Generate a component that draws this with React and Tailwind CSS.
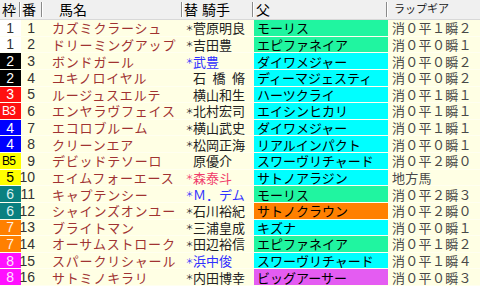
import React from "react";

const frameColors = {
  1: "bg-white text-[#333]",
  2: "bg-black text-white",
  3: "bg-[#ff1010] text-white",
  4: "bg-[#0000ff] text-white",
  5: "bg-[#ffff00] text-black",
  6: "bg-[#0a8080] text-[#d8f0f0]",
  7: "bg-[#ff8000] text-[#fff0e0]",
  8: "bg-[#ff10ff] text-[#ffe0ff]",
};

const sireColors = {
  g: "bg-[#20f5a0]",
  c: "bg-[#00ffff]",
  o: "bg-[#ff8000]",
  p: "bg-[#e45cf2]",
};

const jockeyColors = {
  k: "text-[#222]",
  b: "text-[#3030ff]",
  r: "text-[#f03a6a]",
};

// 枠, 枠色, 番, 馬名, 騎手, 替, 色, 父, 父色, ラップギア
const horses = [
  ["1", 1, 1, "カズミクラーシュ", "菅原明良", true, "k", "モーリス", "g", "消０平１瞬２"],
  ["1", 1, 2, "ドリーミングアップ", "吉田豊", true, "k", "エピファネイア", "g", "消０平０瞬１"],
  ["2", 2, 3, "ボンドガール", "武豊", true, "b", "ダイワメジャー", "c", "消０平０瞬２"],
  ["2", 2, 4, "ユキノロイヤル", "石橋脩", false, "k", "ディーマジェスティ", "c", "消０平０瞬２"],
  ["3", 3, 5, "ルージュスエルテ", "横山和生", false, "k", "ハーツクライ", "c", "消０平１瞬１"],
  ["B3", 3, 6, "エンヤラヴフェイス", "北村宏司", true, "k", "エイシンヒカリ", "c", "消０平１瞬１"],
  ["4", 4, 7, "エコロブルーム", "横山武史", true, "k", "ダイワメジャー", "c", "消０平１瞬１"],
  ["4", 4, 8, "クリーンエア", "松岡正海", true, "k", "リアルインパクト", "c", "消０平０瞬１"],
  ["B5", 5, 9, "デビッドテソーロ", "原優介", false, "k", "スワーヴリチャード", "c", "消０平２瞬０"],
  ["5", 5, 10, "エイムフォーエース", "森泰斗", true, "r", "サトノアラジン", "c", "地方馬"],
  ["6", 6, 11, "キャプテンシー", "Ｍ．デム", true, "b", "モーリス", "g", "消０平２瞬３"],
  ["6", 6, 12, "シャインズオンユー", "石川裕紀", true, "k", "サトノクラウン", "o", "消０平２瞬０"],
  ["7", 7, 13, "ブライトマン", "三浦皇成", true, "k", "キズナ", "c", "消０平０瞬１"],
  ["7", 7, 14, "オーサムストローク", "田辺裕信", true, "k", "エピファネイア", "g", "消０平１瞬２"],
  ["8", 8, 15, "スパークリシャール", "浜中俊", true, "b", "スワーヴリチャード", "c", "消０平１瞬４"],
  ["8", 8, 16, "サトミノキラリ", "内田博幸", true, "k", "ビッグアーサー", "p", "消０平０瞬３"],
];

const Sep = () => <span className="w-px h-[15px] bg-[#8a8a8a] border-r border-white box-content" />;

const App = () => {
  return (
    <div className="w-[480px] h-[286px] grid grid-rows-[20px_repeat(16,1fr)] bg-[#ffffe4] overflow-hidden font-['Liberation_Sans','Noto_Sans_CJK_JP',sans-serif] leading-none">
      {/* header */}
      <div className="flex items-center bg-[#f0f0f0] border-b border-[#d8d8d8] text-[14px] text-black">
        <div className="w-[21px] flex items-center justify-between pl-[2px]">
          <span>枠</span>
          <Sep />
        </div>
        <div className="w-[22px] flex items-center justify-between pl-[1px]">
          <span>番</span>
          <Sep />
        </div>
        <div className="w-[140px] flex items-center justify-between pl-[16px]">
          <span>馬名</span>
          <Sep />
        </div>
        <div className="w-[71px] flex items-center justify-between pl-[1px]">
          <span className="flex gap-[4px]">
            <span>替</span>
            <span>騎手</span>
          </span>
          <Sep />
        </div>
        <div className="w-[134px] flex items-center justify-between pl-[2px]">
          <span>父</span>
          <Sep />
        </div>
        <div className="w-[92px] flex items-center pl-[6px] text-[11px] text-[#222]">
          <span>ラップギア</span>
        </div>
      </div>

      {horses.map(([fl, fc, no, name, jockey, mark, jc, sire, sc, lap]) => (
        <div key={no} className="grid grid-cols-[21px_22px_140px_71px_134px_92px] border-b border-[#fffff0]">
          <div
            className={`${frameColors[fc]} flex items-center justify-end ${
              fl.length > 1 ? "pr-[6px] text-[12px] tracking-[-0.8px]" : "pr-[7px] text-[14px]"
            }`}
          >
            {fl}
          </div>
          <div className="flex items-center justify-end pr-[8px] text-[14px] text-[#333]">{no}</div>
          <div className="flex items-center pl-[9px] text-[13px] tracking-[0.8px] text-[#a03232] font-['Noto_Sans_CJK_JP',sans-serif]">
            {name}
          </div>
          <div className={`flex items-center pl-[3px] text-[13px] font-['Noto_Sans_CJK_JP',sans-serif] ${jockeyColors[jc]}`}>
            <span className="w-[7px] flex items-center justify-center text-[8px]">{mark ? "＊" : ""}</span>
            {jockey === "石橋脩" ? (
              <span className="flex justify-between w-[52px]">
                <span>石</span>
                <span>橋</span>
                <span>脩</span>
              </span>
            ) : (
              <span>{jockey}</span>
            )}
          </div>
          <div className={`${sireColors[sc]} flex items-center pl-[3px] text-[13px] text-black font-['Noto_Sans_CJK_JP',sans-serif]`}>
            {sire}
          </div>
          <div className="flex items-center pl-[4px] text-[13px] tracking-[0.3px] text-[#484848] font-['Noto_Sans_CJK_JP',sans-serif]">
            {lap}
          </div>
        </div>
      ))}
    </div>
  );
};

export default App;
